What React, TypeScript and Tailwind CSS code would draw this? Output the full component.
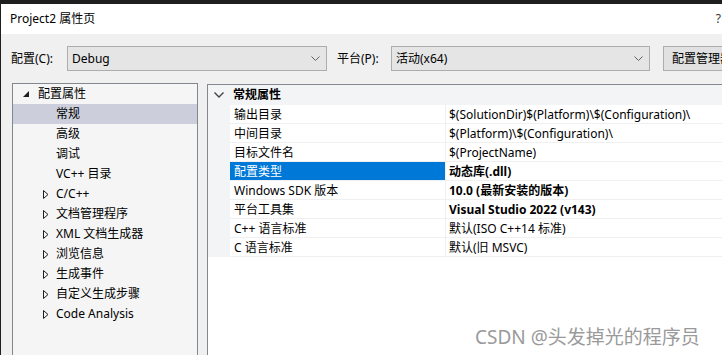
import React from "react";

const font = { fontFamily: '"Noto Sans", "Noto Sans CJK SC", sans-serif' };

const treeItems: { label: string; kind: "open" | "leaf" | "closed"; selected?: boolean }[] = [
  { label: "配置属性", kind: "open" },
  { label: "常规", kind: "leaf", selected: true },
  { label: "高级", kind: "leaf" },
  { label: "调试", kind: "leaf" },
  { label: "VC++ 目录", kind: "leaf" },
  { label: "C/C++", kind: "closed" },
  { label: "文档管理程序", kind: "closed" },
  { label: "XML 文档生成器", kind: "closed" },
  { label: "浏览信息", kind: "closed" },
  { label: "生成事件", kind: "closed" },
  { label: "自定义生成步骤", kind: "closed" },
  { label: "Code Analysis", kind: "closed" },
];

const props: { name: string; value: string; bold?: boolean; selected?: boolean }[] = [
  { name: "输出目录", value: "$(SolutionDir)$(Platform)\\$(Configuration)\\" },
  { name: "中间目录", value: "$(Platform)\\$(Configuration)\\" },
  { name: "目标文件名", value: "$(ProjectName)" },
  { name: "配置类型", value: "动态库(.dll)", bold: true, selected: true },
  { name: "Windows SDK 版本", value: "10.0 (最新安装的版本)", bold: true },
  { name: "平台工具集", value: "Visual Studio 2022 (v143)", bold: true },
  { name: "C++ 语言标准", value: "默认(ISO C++14 标准)" },
  { name: "C 语言标准", value: "默认(旧 MSVC)" },
];

function Chevron() {
  return (
    <svg width="9" height="6" viewBox="0 0 9 6" className="shrink-0">
      <polyline points="0.5,0.5 4.5,4.5 8.5,0.5" fill="none" stroke="#606060" strokeWidth="1" />
    </svg>
  );
}

function Select({ value, width }: { value: string; width: string }) {
  return (
    <div className={`flex h-[25px] shrink-0 items-center justify-between border border-[#adadad] bg-[#e5e5e5] pl-[4px] pr-[6px] ${width}`}>
      <span className="text-[12px] text-black">{value}</span>
      <Chevron />
    </div>
  );
}

export default function App() {
  return (
    <div
      style={font}
      className="relative flex h-[355px] w-[722px] flex-col overflow-hidden border-l border-t-[4px] border-[#1f1f1f] bg-[#f0f0f0] text-[12px] text-black"
    >
      {/* title bar */}
      <div className="flex h-[30px] shrink-0 items-center justify-between bg-white pl-[9px] pr-[1px]">
        <span className="text-[12px]">Project2 属性页</span>
        <span className="text-[12px] text-[#333]">?</span>
      </div>

      {/* config row */}
      <div className="flex shrink-0 items-center pl-[10px] pt-[12px]">
        <span className="w-[56px] shrink-0">配置(C):</span>
        <Select value="Debug" width="w-[260px]" />
        <span className="ml-[10px] w-[54px] shrink-0">平台(P):</span>
        <Select value="活动(x64)" width="w-[259px]" />
        <div className="ml-[13px] flex h-[25px] w-[110px] shrink-0 items-center border border-[#adadad] bg-[#e1e1e1] pl-[8px]">
          <span className="whitespace-nowrap">配置管理器(O)...</span>
        </div>
      </div>

      {/* main */}
      <div className="mt-[12px] flex min-h-0 flex-1">
        {/* tree */}
        <div className="ml-[11px] w-[186px] shrink-0 border border-b-0 border-[#828790] bg-[#f5f5f5]">
          {treeItems.map((t) => (
            <div
              key={t.label}
              className={`flex h-[20px] items-center ${t.selected ? "bg-[#cccedb]" : ""}`}
            >
              {t.kind === "open" && (
                <>
                  <svg width="6" height="6" viewBox="0 0 6 6" className="ml-[10px]">
                    <polygon points="6,0 6,6 0,6" fill="#1e1e1e" />
                  </svg>
                  <span className="ml-[9px]">{t.label}</span>
                </>
              )}
              {t.kind === "leaf" && <span className="ml-[43px]">{t.label}</span>}
              {t.kind === "closed" && (
                <>
                  <svg width="6" height="9" viewBox="0 0 6 9" className="ml-[30px]">
                    <polygon points="0.5,0.5 5,4.5 0.5,8.5" fill="none" stroke="#1e1e1e" strokeWidth="1" />
                  </svg>
                  <span className="ml-[7px] whitespace-nowrap">{t.label}</span>
                </>
              )}
            </div>
          ))}
        </div>

        {/* property grid */}
        <div className="ml-[9px] mt-[1px] flex min-w-0 flex-1 flex-col border-l border-t border-[#828790] bg-white">
          <div className="flex h-[20px] items-center bg-[#f3f4f6]">
            <svg width="10" height="6" viewBox="0 0 10 6" className="ml-[6px]">
              <polyline points="0.5,0.5 5,5 9.5,0.5" fill="none" stroke="#444" strokeWidth="1.4" />
            </svg>
            <span className="ml-[9px] font-bold">常规属性</span>
          </div>
          {props.map((p) => (
            <div key={p.name} className="flex h-[19px] bg-[#f3f4f6]">
              <div
                className={`ml-[22px] flex w-[215px] items-center border-b border-[#f0f0f0] pl-[4px] pt-[1px] ${
                  p.selected ? "bg-[#0078d7] text-white" : "bg-white"
                }`}
              >
                <span className="whitespace-nowrap">{p.name}</span>
              </div>
              <div className="flex flex-1 items-center border-b border-l border-[#f0f0f0] bg-white pl-[3px] pt-[1px]">
                <span className={`whitespace-nowrap ${p.bold ? "font-bold" : ""}`}>{p.value}</span>
              </div>
            </div>
          ))}
        </div>
      </div>

      {/* watermark */}
      <div className="absolute left-[474px] top-[319px] whitespace-nowrap text-[19px] text-[#9a9a9a]">
        CSDN @头发掉光的程序员
      </div>
    </div>
  );
}
